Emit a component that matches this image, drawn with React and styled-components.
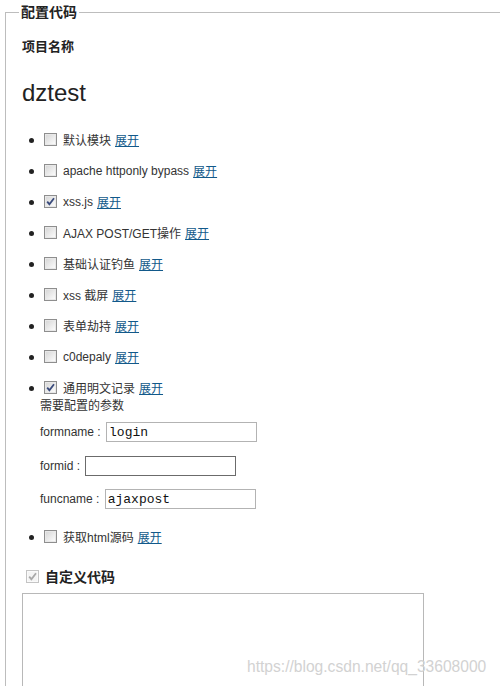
import React from "react";
import styled, { createGlobalStyle } from "styled-components";

const GlobalStyle = createGlobalStyle`
  html, body {
    margin: 0;
    padding: 0;
    overflow: hidden;
    background: #fff;
  }
  body {
    font-family: "Liberation Sans", Arial, "Noto Sans CJK SC", sans-serif;
    font-size: 12px;
    color: #333;
  }
`;

const modules = [
  { name: "默认模块" },
  { name: "apache httponly bypass" },
  { name: "xss.js", checked: true },
  { name: "AJAX POST/GET操作" },
  { name: "基础认证钓鱼" },
  { name: "xss 截屏" },
  { name: "表单劫持" },
  { name: "c0depaly" },
  {
    name: "通用明文记录",
    checked: true,
    params: [
      { label: "formname", value: "login" },
      { label: "formid", value: "", focused: true },
      { label: "funcname", value: "ajaxpost" },
    ],
  },
  { name: "获取html源码" },
];

function Checkbox({ checked, disabled }) {
  return (
    <Box $disabled={disabled}>
      {checked && (
        <svg width="11" height="11" viewBox="0 0 11 11">
          <path
            d="M2.2 5.6 L4.4 8.2 L9 2.2"
            fill="none"
            stroke={disabled ? "#a8a8a8" : "#3a4b7c"}
            strokeWidth="1.8"
          />
        </svg>
      )}
    </Box>
  );
}

export default function App() {
  return (
    <Page>
      <GlobalStyle />
      <Fieldset>
        <Legend>配置代码</Legend>
        <Label>项目名称</Label>
        <ProjectName>dztest</ProjectName>
        <ModuleList>
          {modules.map((m) => (
            <ModuleItem key={m.name}>
              <ModuleLine>
                <Bullet />
                <Checkbox checked={m.checked} />
                <ModuleName>{m.name}</ModuleName>
                <Toggle href="#">展开</Toggle>
              </ModuleLine>
              {m.params && (
                <Params>
                  <ParamsTitle>需要配置的参数</ParamsTitle>
                  {m.params.map((p) => (
                    <ParamRow key={p.label}>
                      {p.label} : <ParamInput $focused={p.focused} defaultValue={p.value} />
                    </ParamRow>
                  ))}
                </Params>
              )}
            </ModuleItem>
          ))}
        </ModuleList>
        <CustomHead>
          <Checkbox checked disabled />
          <span>自定义代码</span>
        </CustomHead>
        <CodeArea />
      </Fieldset>
      <Watermark>https://blog.csdn.net/qq_33608000</Watermark>
    </Page>
  );
}

const Page = styled.div`
  position: relative;
  height: 686px;
  padding-top: 4px;
  box-sizing: border-box;
  overflow: hidden;
`;

const Fieldset = styled.fieldset`
  margin: 0 0 0 5px;
  padding: 0 0 0 16px;
  width: 520px;
  border: 1px solid #bdbdbd;
  box-sizing: border-box;
  min-height: 720px;
`;

const Legend = styled.legend`
  margin-left: -3px;
  padding: 0 2px;
  font-size: 14px;
  line-height: 16px;
  font-weight: bold;
  color: #222;
`;

const Label = styled.div`
  margin-top: 17px;
  font-size: 13px;
  line-height: 20px;
  font-weight: bold;
  color: #222;
`;

const ProjectName = styled.div`
  margin-top: 21px;
  font-size: 24px;
  line-height: 30px;
  color: #222;
`;

const ModuleList = styled.ul`
  list-style: none;
  margin: 16px 0 0;
  padding: 0;
`;

const ModuleItem = styled.li`
  padding: 7px 0;
`;

const ModuleLine = styled.div`
  display: flex;
  align-items: center;
  height: 17px;
`;

const Bullet = styled.span`
  width: 5px;
  height: 5px;
  border-radius: 50%;
  background: #222;
  margin: 2px 10px 0 7px;
`;

const Box = styled.span`
  display: inline-flex;
  align-items: center;
  justify-content: center;
  width: 13px;
  height: 13px;
  box-sizing: border-box;
  border: 1px solid ${(p) => (p.$disabled ? "#c4c4c4" : "#8e8e8e")};
  background: ${(p) =>
    p.$disabled ? "#f4f4f4" : "linear-gradient(135deg, #d4d4d4 0%, #f2f2f2 70%, #fff 100%)"};
  box-shadow: inset 0 0 0 1px ${(p) => (p.$disabled ? "#fafafa" : "#e8e8e8")};
  flex-shrink: 0;
`;

const ModuleName = styled.span`
  margin-left: 6px;
  margin-right: 4px;
  white-space: nowrap;
`;

const Toggle = styled.a`
  color: #12598a;
  text-decoration: underline;
  white-space: nowrap;
`;

const Params = styled.div`
  margin-left: 18px;
  padding-bottom: 5px;
`;

const ParamsTitle = styled.div`
  margin-top: 2px;
  line-height: 16px;
  margin-bottom: 8px;
`;

const ParamRow = styled.div`
  display: flex;
  align-items: center;
  height: 20px;
  white-space: pre;
  & + & {
    margin-top: 13.5px;
  }
`;

const ParamInput = styled.input`
  width: 151px;
  height: 20px;
  box-sizing: border-box;
  margin: 0 0 0 2px;
  padding: 1px 2px 0;
  border: 1px solid ${(p) => (p.$focused ? "#6b6b6b" : "#b3b3b3")};
  font-family: "Liberation Mono", "Courier New", monospace;
  font-size: 13px;
  color: #111;
  outline: none;
`;

const CustomHead = styled.div`
  display: flex;
  align-items: center;
  gap: 6px;
  margin: 15px 0 0 4px;
  height: 18px;
  font-size: 14px;
  font-weight: bold;
  color: #222;
`;

const CodeArea = styled.textarea`
  display: block;
  margin-top: 8px;
  width: 402px;
  height: 150px;
  box-sizing: border-box;
  border: 1px solid #b8b8b8;
  resize: none;
  outline: none;
`;

const Watermark = styled.div`
  position: absolute;
  left: 247px;
  top: 657px;
  font-size: 15.6px;
  line-height: 20px;
  color: #d2d2d2;
  pointer-events: none;
`;
